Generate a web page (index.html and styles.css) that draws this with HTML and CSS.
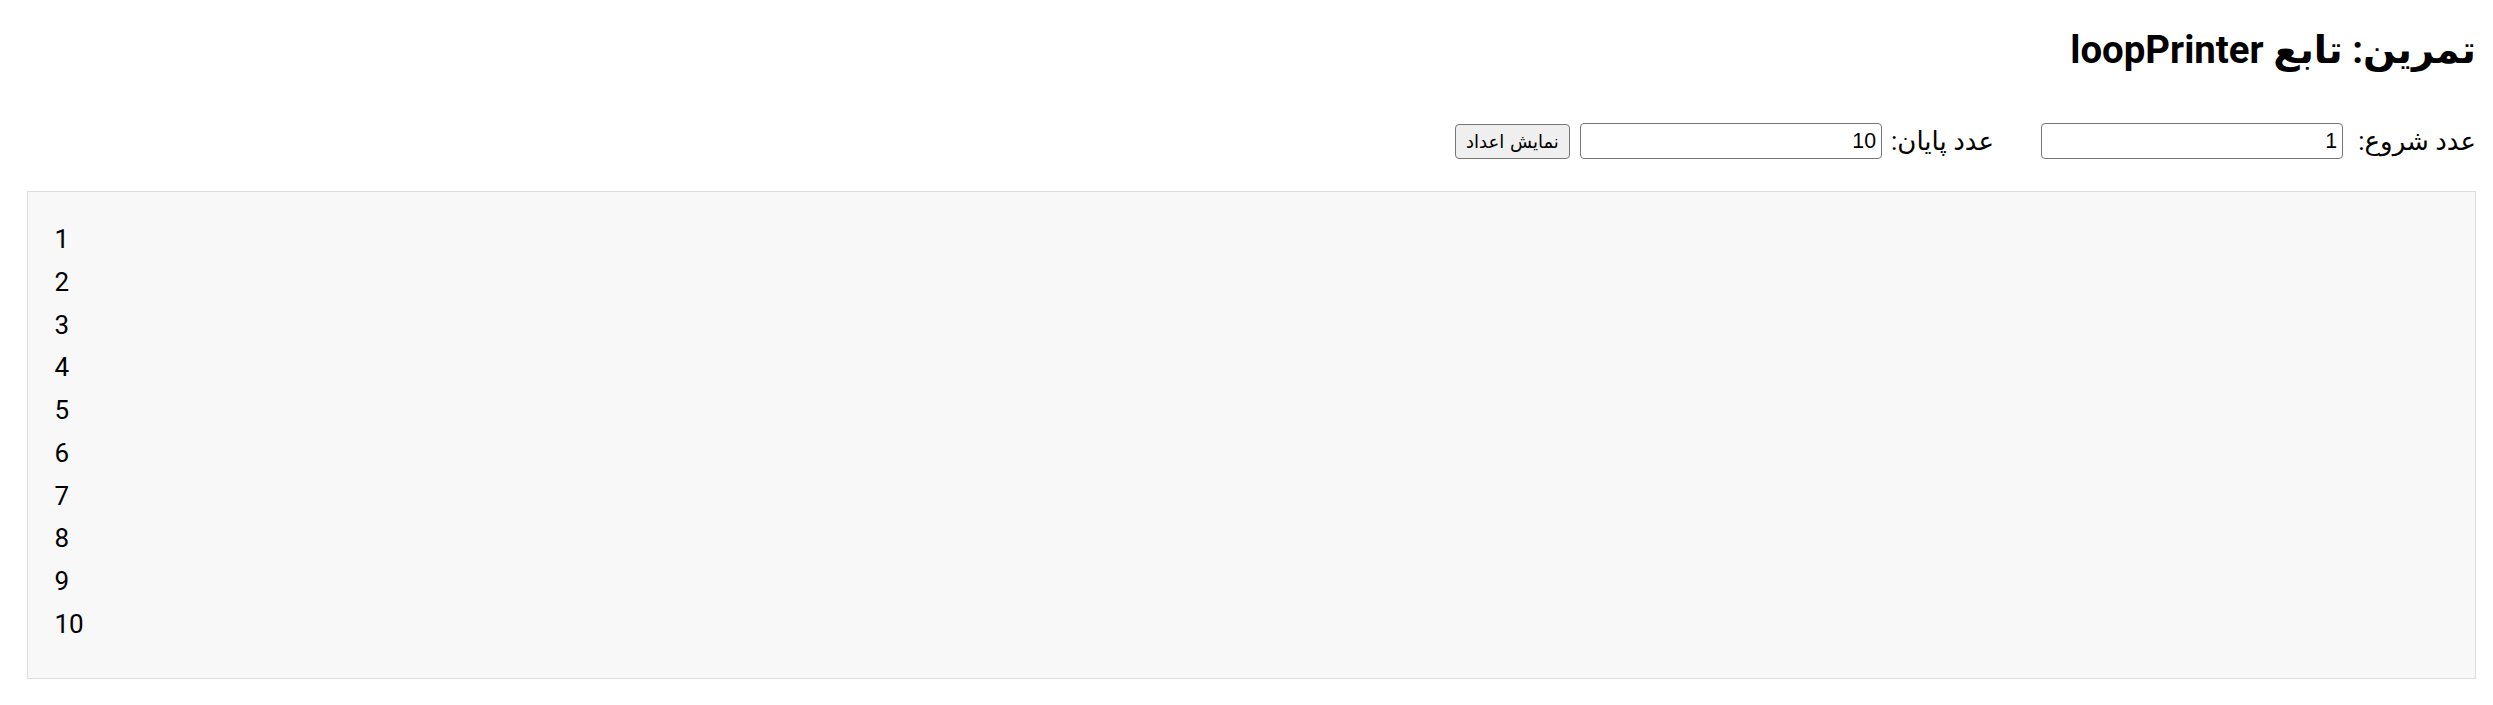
FILE: index.html
```html
<!DOCTYPE html>
<html lang="fa" dir="rtl">
<head>
<meta charset="utf-8">
<title>loopPrinter</title>
<link rel="stylesheet" href="styles.css">
</head>
<body>
<h2 class="title">تمرین: تابع loopPrinter</h2>
<div class="controls">
  <label class="label label-start" for="start">عدد شروع:</label>
  <input class="num-input" id="start" type="text" value="1">
  <label class="label label-end" for="end">عدد پایان:</label>
  <input class="num-input" id="end" type="text" value="10">
  <button class="show-btn" type="button">نمایش اعداد</button>
</div>
<div class="output">
  <div class="line">1</div>
  <div class="line">2</div>
  <div class="line">3</div>
  <div class="line">4</div>
  <div class="line">5</div>
  <div class="line">6</div>
  <div class="line">7</div>
  <div class="line">8</div>
  <div class="line">9</div>
  <div class="line">10</div>
</div>
</body>
</html>
```
FILE: styles.css
```css
html, body {
  background: #ffffff;
}
body {
  margin: 0;
  padding: 0 17px 0 27px;
  font-family: Roboto, "DejaVu Sans", sans-serif;
  font-size: 25.6px;
  color: #000000;
}
.title {
  margin: 27px 0 0 0;
  font-size: 38.4px;
  line-height: 45px;
  font-weight: bold;
  height: 45px;
}
.controls {
  display: flex;
  flex-direction: row;
  align-items: center;
  height: 36px;
  margin-top: 51px;
}
.label {
  flex: none;
  font-size: 26px;
  line-height: 30px;
  white-space: nowrap;
}
.label-start {
  width: 121px;
  margin-left: 12px;
  text-align: right;
}
.label-end {
  width: 114px;
  margin-right: 36px;
  margin-left: 9px;
  text-align: left;
}
.num-input {
  flex: none;
  box-sizing: border-box;
  width: 302px;
  height: 36px;
  border: 1px solid #767676;
  border-radius: 4px;
  padding: 0 5px;
  font-family: "Liberation Sans", Arial, sans-serif;
  font-size: 21.3px;
  color: #000;
  background: #fff;
  direction: rtl;
  text-align: right;
}
.show-btn {
  flex: none;
  box-sizing: border-box;
  width: 115px;
  height: 35px;
  margin-right: 10px;
  border: 1px solid #767676;
  border-radius: 4px;
  background: #efefef;
  padding: 0;
  font-family: "DejaVu Sans", sans-serif;
  font-size: 18px;
  color: #000;
}
.output {
  margin-top: 32px;
  box-sizing: border-box;
  height: 488px;
  border: 1px solid #dddddd;
  background: #f8f8f8;
  padding: 26px 25.6px 0 26.5px;
  direction: ltr;
  text-align: left;
}
.line {
  font-family: Roboto, sans-serif;
  font-size: 26px;
  line-height: 42.78px;
  height: 42.78px;
}
```
